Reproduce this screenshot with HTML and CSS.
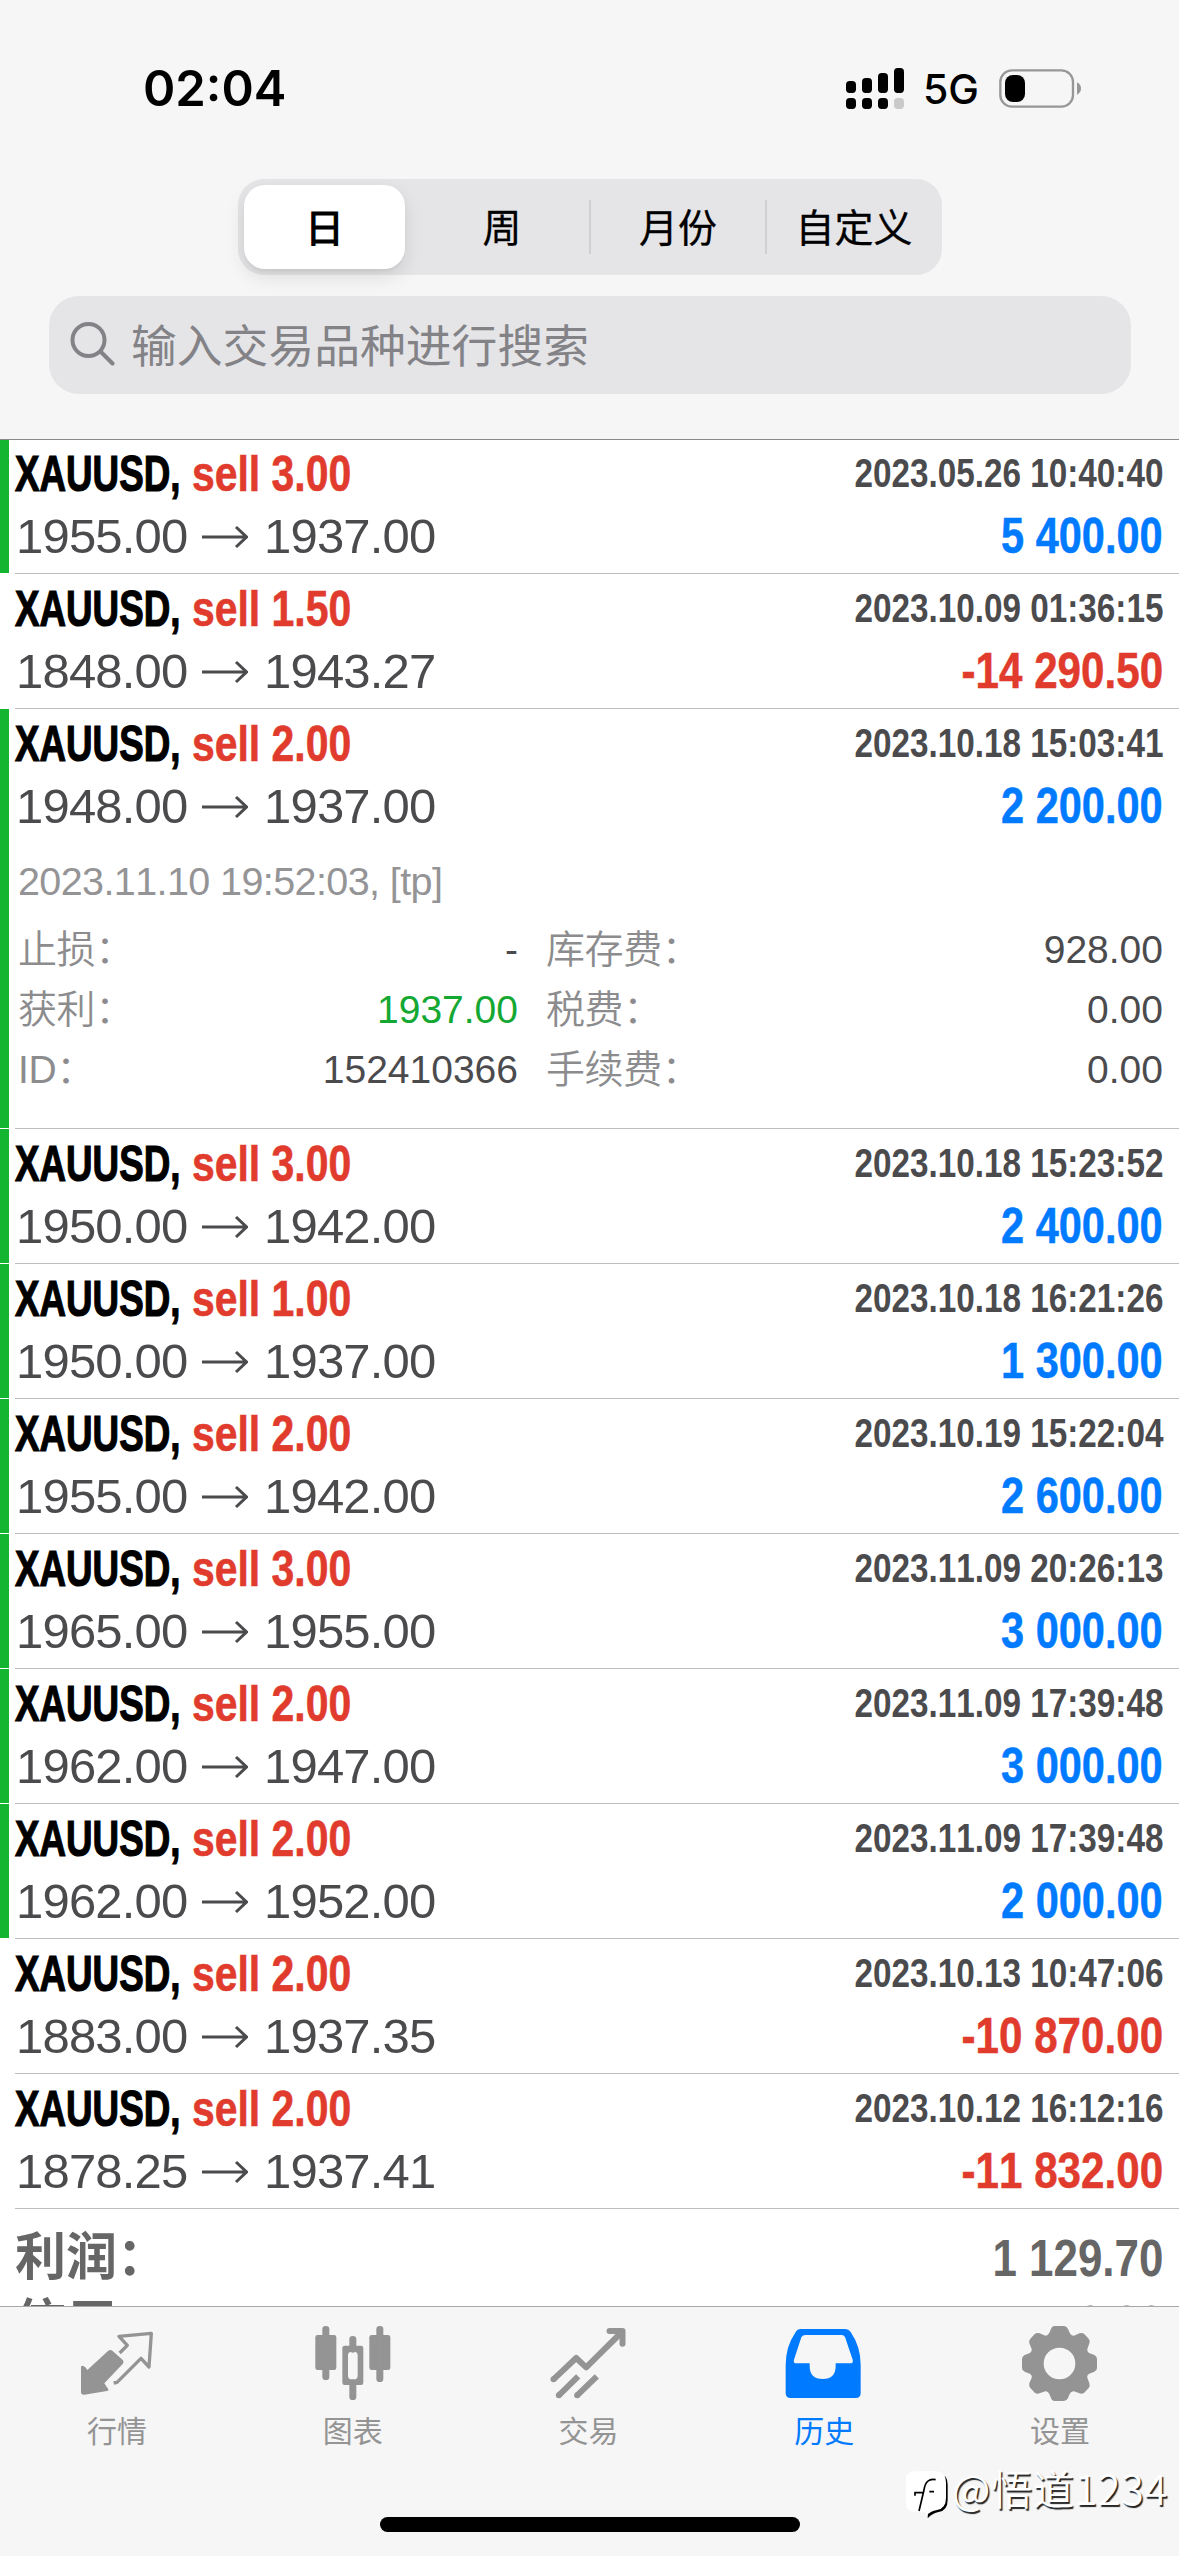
FILE: index.html
```html
<!DOCTYPE html>
<html lang="zh-CN">
<head>
<meta charset="utf-8">
<title>历史</title>
<link rel="stylesheet" href="styles.css">
</head>
<body>
<div class="screen">
  <header class="header">
    <div class="status">
      <span class="clock">02:04</span>
      <div class="status-right">
        <svg class="signal" viewBox="78 81 174 123">
          <g fill="#000">
            <rect x="78" y="120" width="30" height="36" rx="11"/><rect x="126" y="111" width="30" height="45" rx="11"/>
            <rect x="174" y="96" width="30" height="60" rx="11"/><rect x="222" y="81" width="30" height="75" rx="11"/>
            <rect x="78" y="171" width="30" height="33" rx="11"/><rect x="126" y="171" width="30" height="33" rx="11"/>
            <rect x="174" y="171" width="30" height="33" rx="11"/>
          </g>
          <rect x="222" y="171" width="30" height="33" rx="11" fill="#c9c9c9"/>
        </svg>
        <span class="network">5G</span>
        <svg class="battery" viewBox="537 84 246 117">
          <rect x="541" y="88" width="218" height="109" rx="35" fill="none" stroke="#979797" stroke-width="7"/>
          <rect x="555" y="102" width="60" height="81" rx="24" fill="#000"/>
          <path d="M771 124Q783 130 783 142.500Q783 155 771 161Z" fill="#979797"/>
        </svg>
      </div>
    </div>
    <nav class="segments">
      <span class="segment selected">日</span><span class="segment">周</span><span class="segment divided">月份</span><span class="segment divided">自定义</span>
    </nav>
    <div class="search">
      <svg class="search-icon" viewBox="0 0 45 44" fill="none" stroke="#838387" stroke-width="4" stroke-linecap="round"><circle cx="18.500" cy="18" r="16"/><path d="M30.500 29.500L42.500 41.500"/></svg>
      <span>输入交易品种进行搜索</span>
    </div>
  </header>

  <main class="list">
    <section class="deal marked">
      <div class="top"><span class="symbol">XAUUSD,</span><span class="side">sell 3.00</span><time>2023.05.26 10:40:40</time></div>
      <div class="bottom"><span class="price">1955.00</span><svg class="arrow" viewBox="0 0 46 24"><path d="M0 12H44M34 2L44.500 12L34 22"/></svg><span class="price">1937.00</span><span class="profit">5 400.00</span></div>
    </section>
    <section class="deal">
      <div class="top"><span class="symbol">XAUUSD,</span><span class="side">sell 1.50</span><time>2023.10.09 01:36:15</time></div>
      <div class="bottom"><span class="price">1848.00</span><svg class="arrow" viewBox="0 0 46 24"><path d="M0 12H44M34 2L44.500 12L34 22"/></svg><span class="price">1943.27</span><span class="profit loss">-14 290.50</span></div>
    </section>
    <section class="deal marked expanded">
      <div class="top"><span class="symbol">XAUUSD,</span><span class="side">sell 2.00</span><time>2023.10.18 15:03:41</time></div>
      <div class="bottom"><span class="price">1948.00</span><svg class="arrow" viewBox="0 0 46 24"><path d="M0 12H44M34 2L44.500 12L34 22"/></svg><span class="price">1937.00</span><span class="profit">2 200.00</span></div>
      <div class="closed">2023.11.10 19:52:03, [tp]</div>
      <div class="details">
        <span class="label">止损：</span><span class="value">-</span><span class="label">库存费：</span><span class="value">928.00</span>
        <span class="label">获利：</span><span class="value green">1937.00</span><span class="label">税费：</span><span class="value">0.00</span>
        <span class="label">ID：</span><span class="value">152410366</span><span class="label">手续费：</span><span class="value">0.00</span>
      </div>
    </section>
    <section class="deal marked">
      <div class="top"><span class="symbol">XAUUSD,</span><span class="side">sell 3.00</span><time>2023.10.18 15:23:52</time></div>
      <div class="bottom"><span class="price">1950.00</span><svg class="arrow" viewBox="0 0 46 24"><path d="M0 12H44M34 2L44.500 12L34 22"/></svg><span class="price">1942.00</span><span class="profit">2 400.00</span></div>
    </section>
    <section class="deal marked">
      <div class="top"><span class="symbol">XAUUSD,</span><span class="side">sell 1.00</span><time>2023.10.18 16:21:26</time></div>
      <div class="bottom"><span class="price">1950.00</span><svg class="arrow" viewBox="0 0 46 24"><path d="M0 12H44M34 2L44.500 12L34 22"/></svg><span class="price">1937.00</span><span class="profit">1 300.00</span></div>
    </section>
    <section class="deal marked">
      <div class="top"><span class="symbol">XAUUSD,</span><span class="side">sell 2.00</span><time>2023.10.19 15:22:04</time></div>
      <div class="bottom"><span class="price">1955.00</span><svg class="arrow" viewBox="0 0 46 24"><path d="M0 12H44M34 2L44.500 12L34 22"/></svg><span class="price">1942.00</span><span class="profit">2 600.00</span></div>
    </section>
    <section class="deal marked">
      <div class="top"><span class="symbol">XAUUSD,</span><span class="side">sell 3.00</span><time>2023.11.09 20:26:13</time></div>
      <div class="bottom"><span class="price">1965.00</span><svg class="arrow" viewBox="0 0 46 24"><path d="M0 12H44M34 2L44.500 12L34 22"/></svg><span class="price">1955.00</span><span class="profit">3 000.00</span></div>
    </section>
    <section class="deal marked">
      <div class="top"><span class="symbol">XAUUSD,</span><span class="side">sell 2.00</span><time>2023.11.09 17:39:48</time></div>
      <div class="bottom"><span class="price">1962.00</span><svg class="arrow" viewBox="0 0 46 24"><path d="M0 12H44M34 2L44.500 12L34 22"/></svg><span class="price">1947.00</span><span class="profit">3 000.00</span></div>
    </section>
    <section class="deal marked">
      <div class="top"><span class="symbol">XAUUSD,</span><span class="side">sell 2.00</span><time>2023.11.09 17:39:48</time></div>
      <div class="bottom"><span class="price">1962.00</span><svg class="arrow" viewBox="0 0 46 24"><path d="M0 12H44M34 2L44.500 12L34 22"/></svg><span class="price">1952.00</span><span class="profit">2 000.00</span></div>
    </section>
    <section class="deal">
      <div class="top"><span class="symbol">XAUUSD,</span><span class="side">sell 2.00</span><time>2023.10.13 10:47:06</time></div>
      <div class="bottom"><span class="price">1883.00</span><svg class="arrow" viewBox="0 0 46 24"><path d="M0 12H44M34 2L44.500 12L34 22"/></svg><span class="price">1937.35</span><span class="profit loss">-10 870.00</span></div>
    </section>
    <section class="deal">
      <div class="top"><span class="symbol">XAUUSD,</span><span class="side">sell 2.00</span><time>2023.10.12 16:12:16</time></div>
      <div class="bottom"><span class="price">1878.25</span><svg class="arrow" viewBox="0 0 46 24"><path d="M0 12H44M34 2L44.500 12L34 22"/></svg><span class="price">1937.41</span><span class="profit loss">-11 832.00</span></div>
    </section>
    <section class="totals">
      <div class="total"><span>利润：</span><span class="amount">1 129.70</span></div>
      <div class="total"><span>信用：</span><span class="amount">0.00</span></div>
    </section>
  </main>

  <footer class="tabbar">
    <nav class="tabs">
      <a class="tab">
        <svg class="tab-icon" viewBox="60 45 228 228">
          <path d="M63 170Q68 164 76 172L82 180L144 123Q151 117 158 123L189 151Q193 157 188 162L133 220L143 235Q149 241 141 243L73 254Q63 255 63 246Z" fill="currentColor"/>
          <path d="M179 129L202 106L177 79L274 70L267 171L243 145L171 217L161 219" fill="none" stroke="currentColor" stroke-width="10" stroke-linejoin="round"/>
        </svg>
        <span>行情</span>
      </a>
      <a class="tab">
        <svg class="tab-icon" viewBox="767 45 228 228" fill="currentColor">
          <rect x="765" y="75" width="63" height="105" rx="7"/><rect x="786" y="48" width="21" height="162" rx="10"/>
          <rect x="927" y="75" width="63" height="105" rx="7"/><rect x="948" y="48" width="21" height="168" rx="10"/>
          <rect x="867" y="78" width="21" height="50" rx="10"/><rect x="867" y="210" width="21" height="60" rx="10"/>
          <path fill-rule="evenodd" d="M853 107H902Q909 107 909 114V218Q909 225 902 225H853Q846 225 846 218V114Q846 107 853 107ZM874 125Q863 125 863 136V197Q863 208 874 208H881Q892 208 892 197V136Q892 125 881 125Z"/>
        </svg>
        <span>图表</span>
      </a>
      <a class="tab">
        <svg class="tab-icon" viewBox="94.500 45 228 228" fill="none" stroke="currentColor" stroke-width="18" stroke-linejoin="round">
          <path d="M102 208L170 144L200 172L304 69M118 256L176 199M173 256L232 199"/>
          <path d="M270 63H309V101" stroke-linecap="round"/>
          <path d="M280 60H316V96Z" fill="currentColor" stroke="none"/>
          <g fill="currentColor" stroke="none"><circle cx="102" cy="208" r="9"/><circle cx="118" cy="256" r="9"/><circle cx="173" cy="256" r="9"/></g>
        </svg>
        <span>交易</span>
      </a>
      <a class="tab active">
        <svg class="tab-icon" viewBox="802 45 228 228">
          <path fill="currentColor" fill-rule="evenodd" d="M843 57H977Q987 57 993 66Q1023 110 1023 165V249Q1023 264 1008 264H813Q798 264 798 249V165Q798 110 828 66Q833 57 843 57ZM857 75Q849 75 845 82L823 149Q820 160 830 160H870V168Q870 207 909 207Q948 207 948 168V160H991Q1002 160 999 149L977 84Q974 75 966 75Z"/>
        </svg>
        <span>历史</span>
      </a>
      <a class="tab">
        <svg class="tab-icon" viewBox="429 45 228 228">
          <path fill="currentColor" fill-rule="evenodd" d="M524 48H552Q560 48 564 57L569 68Q573 77 582 77L598 70Q605 67 612 71L626 86Q631 92 628 100L622 117Q620 125 627 129L643 135Q651 139 651 147V174Q651 182 643 185L628 191Q620 195 622 203L628 220Q631 228 626 234L612 249Q605 253 598 250L582 244Q573 243 569 252L564 264Q560 273 552 273H524Q516 273 513 264L508 252Q504 243 496 244L479 250Q472 253 465 249L451 234Q446 228 448 220L455 203Q457 195 449 191L434 185Q426 182 426 174V147Q426 139 434 135L450 129Q457 125 455 117L448 100Q446 92 451 86L465 71Q472 67 479 70L496 77Q504 77 508 68L513 57Q516 48 524 48ZM538.500 113A47.500 47.500 0 1 0 538.500 208A47.500 47.500 0 1 0 538.500 113Z"/>
        </svg>
        <span>设置</span>
      </a>
    </nav>
    <div class="home-indicator"></div>
  </footer>

  <div class="watermark">
    <svg class="watermark-logo" viewBox="78 478 126 144">
      <path transform="translate(4 4)" fill="#000" d="M105 481H170Q199 484 199 515V560Q199 592 172 597Q155 599 139 616L140 597H108Q78 594 78 565V510Q78 484 105 481Z"/>
      <path fill="#fff" d="M105 479H170Q198 482 198 513V558Q198 590 171 595Q152 597 137 614L138 602H108Q74 599 74 565V508Q74 482 105 479Z"/>
      <path d="M167 504Q137 498 132 535L117 598M105 552V543H129M148 540H162" fill="none" stroke="#000" stroke-width="5"/>
    </svg>
    <span>@悟道1234</span>
  </div>
</div>
</body>
</html>
```
FILE: styles.css
```css
* { box-sizing: border-box; }

body {
  margin: 0;
  background: #fff;
  font-family: "Liberation Sans", "Noto Sans CJK SC", sans-serif;
}

.screen {
  position: relative;
  display: flex;
  flex-direction: column;
  width: 1179px;
  height: 2556px;
  overflow: hidden;
}

/* header */
.header {
  flex: none;
  position: relative;
  z-index: 1;
  height: 440px;
  background: #f6f6f6;
  border-bottom: 1px solid #8a8a8c;
}
.status {
  display: flex;
  justify-content: space-between;
  align-items: center;
  height: 179px;
  padding: 0 98px 3px 143px;
  font-family: Inter, sans-serif;
}
.clock { font-size: 49px; font-weight: 600; }
.status-right { display: flex; align-items: center; }
.signal { width: 58px; height: 41px; margin-right: 19px; }
.network { width: 76px; font-size: 41px; font-weight: 500; padding-top: 2px; }
.battery { width: 82px; height: 39px; }

.segments {
  display: grid;
  grid-template-columns: repeat(4, 1fr);
  width: 704px;
  height: 96px;
  margin-left: 238px;
  padding: 6px 0;
  border-radius: 26px;
  background: #e5e5e7;
}
.segment {
  position: relative;
  font: 400 39px/80px "Noto Sans CJK SC", sans-serif;
  text-align: center;
  -webkit-text-stroke: .3px #000;
}
.selected {
  margin: 0 9px 0 6px;
  border-radius: 21px;
  background: #fff;
  box-shadow: 0 8px 20px rgba(0, 0, 0, .1), 0 3px 3px rgba(0, 0, 0, .04);
  -webkit-text-stroke: 1.200px #000;
}
.divided::before {
  content: "";
  position: absolute;
  left: -1px;
  top: 15px;
  width: 2px;
  height: 54px;
  background: #d0d0d3;
}

.search {
  display: flex;
  align-items: center;
  gap: 16px;
  width: 1082px;
  height: 98px;
  margin: 21px 0 0 49px;
  padding-left: 21px;
  border-radius: 30px;
  background: #e5e5e7;
  color: #838387;
  font: 400 45.800px/94px "Noto Sans CJK SC", sans-serif;
}
.search span { margin-top: -4px; }
.search-icon { width: 45px; height: 44px; margin-top: -2px; }

/* deals */
.list {
  flex: 1;
  min-height: 0;
  overflow: hidden;
  margin-top: -1px;
  font-kerning: none;
}
.deal {
  position: relative;
  height: 135px;
  padding: 7px 16px 0 15px;
}
.deal::after {
  content: "";
  position: absolute;
  left: 15px;
  right: 0;
  bottom: 0;
  height: 1px;
  background: #bdbdc0;
}
.marked::before {
  content: "";
  position: absolute;
  left: 0;
  top: 0;
  bottom: 1px;
  width: 9px;
  background: #14b531;
}
.expanded { height: 420px; }

.top, .bottom { display: flex; white-space: pre; }
.top {
  height: 56px;
  font-weight: 700;
  font-size: 50px;
  line-height: 56px;
}
/* condensed bold faces are made by narrowing the regular width */
.symbol {
  width: 177px;
  transform: scaleX(.735);
  transform-origin: left;
  -webkit-text-stroke: 1.200px #000;
}
.side {
  color: #e03b2d;
  transform: scaleX(.818);
  transform-origin: left;
  -webkit-text-stroke: .6px #e03b2d;
}
time {
  margin-left: auto;
  font-size: 40px;
  line-height: 54px;
  color: #4b4b4e;
  transform: scaleX(.832);
  transform-origin: right;
}

.bottom {
  height: 70px;
  margin-top: -1px;
  align-items: center;
  font-size: 49px;
  line-height: 70px;
  color: #4b4b4e;
}
.price { width: 173px; letter-spacing: -.8px; text-indent: 1px; }
.arrow {
  width: 46px;
  height: 24px;
  margin: 2px 15px 0 14px;
  fill: none;
  stroke: #4b4b4e;
  stroke-width: 3;
}
.profit {
  margin-left: auto;
  font-weight: 700;
  font-size: 50px;
  line-height: 72px;
  color: #007aff;
  transform: scaleX(.83);
  transform-origin: right;
  -webkit-text-stroke: .5px currentColor;
}
.loss { color: #e03b2d; transform: scaleX(.843); }

.closed {
  margin: 1px 0 0 3px;
  font-size: 39.500px;
  line-height: 78px;
  letter-spacing: -.6px;
  color: #949496;
}
.details {
  display: grid;
  grid-template-columns: 170px 330px 200px 1fr;
  grid-auto-rows: 60px;
  margin-left: 3px;
  font-size: 39px;
  line-height: 60px;
}
.label { color: #8c8c8e; font-weight: 350; letter-spacing: -.4px; }
.label:nth-child(4n + 3) { padding-left: 28px; }
.value { text-align: right; color: #4b4b4e; }
.green { color: #14a832; }

.totals { padding: 16px 16px 0 15px; }
.total {
  display: flex;
  justify-content: space-between;
  height: 66px;
  font-size: 51px;
  font-weight: 700;
  line-height: 66px;
  color: #666;
}
.amount {
  font-size: 52px;
  transform: scaleX(.845);
  transform-origin: right;
}

/* tab bar */
.tabbar {
  flex: none;
  height: 250px;
  border-top: 1px solid #a9a9ab;
  background: #f6f6f6;
}
.tabs { display: grid; grid-template-columns: repeat(5, 1fr); padding-top: 18px; }
.tab {
  display: flex;
  flex-direction: column;
  align-items: center;
  gap: 8px;
  color: #949494;
  font: 400 30px/40px "Noto Sans CJK SC", sans-serif;
}
.tab span { margin-right: 2px; }
.active { color: #007aff; }
.tab-icon { width: 76px; height: 76px; overflow: visible; }
.home-indicator {
  width: 420px;
  height: 15px;
  margin: 68px auto 0;
  border-radius: 8px;
  background: #000;
}

.watermark {
  position: absolute;
  left: 906px;
  top: 2455px;
  display: flex;
  align-items: center;
  gap: 4px;
  color: #fff;
  font: 350 41px/60px "Noto Sans CJK SC", sans-serif;
  letter-spacing: .8px;
  text-shadow: 1.500px 1.500px 1px #222;
}
.watermark-logo { width: 42px; height: 48px; margin-top: 16px; }
```
